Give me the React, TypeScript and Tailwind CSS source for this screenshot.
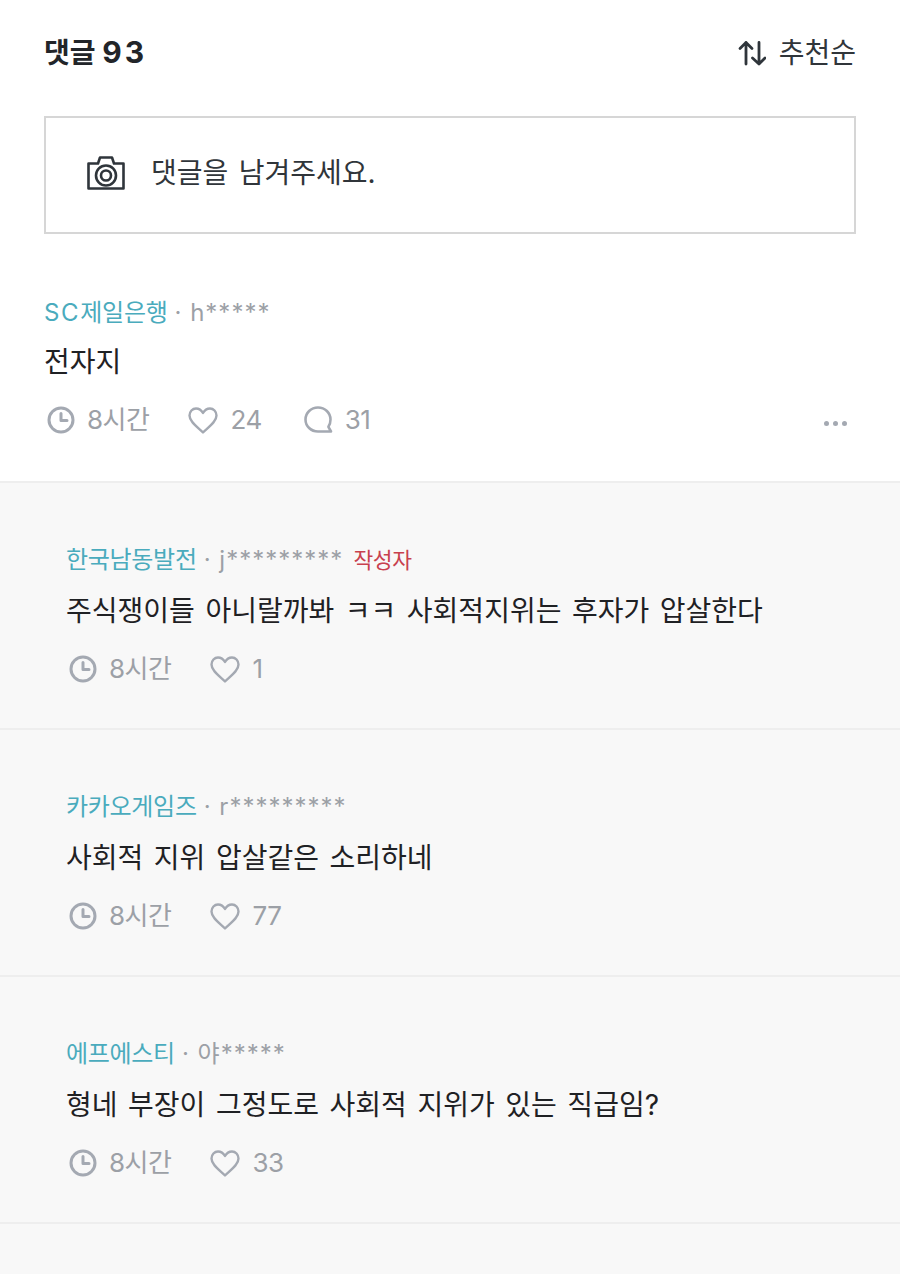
import React from 'react';

interface CommentItem {
  company: React.ReactNode;
  user: string;
  body: string;
  likes: number;
  replies?: number;
  author?: boolean;
}

const comments: CommentItem[] = [
  { company: '한국남동발전', user: 'j*********', body: '주식쟁이들 아니랄까봐 ㅋㅋ 사회적지위는 후자가 압살한다', likes: 1, author: true },
  { company: '카카오게임즈', user: 'r*********', body: '사회적 지위 압살같은 소리하네', likes: 77 },
  { company: '에프에스티', user: '야*****', body: '형네 부장이 그정도로 사회적 지위가 있는 직급임?', likes: 33 },
];

const ClockIcon = () => (
  <svg width="28" height="28" viewBox="0 0 28 28" fill="none" stroke="#a4a9b2" strokeWidth="3" strokeLinecap="round" strokeLinejoin="round">
    <circle cx="14" cy="14" r="12" />
    <path d="M14 7.500V14.500H20" />
  </svg>
);

const HeartIcon = () => (
  <svg width="30" height="27" viewBox="0 0 30 27" fill="none" stroke="#a4a9b2" strokeWidth="2.400" strokeLinejoin="round">
    <path d="M15 25.500C10 20.500 1.500 15 1.500 8.500C1.500 4.500 4.500 1.500 8 1.500C11 1.500 13.500 3.300 15 6C16.500 3.300 19 1.500 22 1.500C25.500 1.500 28.500 4.500 28.500 8.500C28.500 15 20 20.500 15 25.500Z" />
  </svg>
);

const BubbleIcon = () => (
  <svg width="30" height="30" viewBox="0 0 30 30" fill="none" stroke="#a4a9b2" strokeWidth="2.600" strokeLinecap="round" strokeLinejoin="round">
    <path d="M15 2.500C8 2.500 2.500 7.800 2.500 14.500S8 26.500 15 26.500H28L25.400 21.800C26.800 19.800 27.500 17.300 27.500 14.500 27.500 7.800 22 2.500 15 2.500Z" />
  </svg>
);

const CameraIcon = () => (
  <svg width="38" height="34" viewBox="0 0 38 34" fill="none" stroke="#2f353b" strokeWidth="2.600" strokeLinejoin="round">
    <path d="M1.500 7.500H11L13 1.500H25L27 7.500H36.500V32.500H1.500Z" />
    <circle cx="19" cy="19.500" r="10" />
    <circle cx="19" cy="19.500" r="5" />
  </svg>
);

const SortIcon = () => (
  <svg width="28" height="26" viewBox="0 0 28 26" fill="none" stroke="#2f353b" strokeWidth="2.800" strokeLinecap="round" strokeLinejoin="round">
    <path d="M8 24V2.500M2 8.500L8 2.500L14 8.500" />
    <path d="M21 2.500V24M14.500 18L21 24L27 18" />
  </svg>
);

const Stat = ({ icon, label, className = '' }: { icon: React.ReactNode; label: string | number; className?: string }) => (
  <span className={`flex items-center gap-[12px] text-[26px] leading-[30px] tracking-[-0.5px] text-[#9ca0a6] ${className}`}>
    {icon}
    <span>{label}</span>
  </span>
);

const Meta = ({ likes, replies }: { likes: number; replies?: number }) => (
  <div className="flex items-center gap-[39px]">
    <Stat icon={<ClockIcon />} label="8시간" />
    <Stat icon={<HeartIcon />} label={likes} />
    {replies !== undefined && <Stat icon={<BubbleIcon />} label={replies} className="ml-[2px]" />}
  </div>
);

const CommentHead = ({ item }: { item: CommentItem }) => (
  <div className="flex items-center text-[24px] leading-[30px]">
    <span className="tracking-[-0.3px] text-[#4aabbd]">{item.company}</span>
    <span className="ml-[7px] tracking-[1px] text-[#9ca0a6]">· {item.user}</span>
    {item.author && <span className="ml-[10px] text-[21.500px] tracking-[-0.3px] text-[#c8414e]">작성자</span>}
  </div>
);

export default function App() {
  const first: CommentItem = {
    company: (
      <>
        <span className="tracking-[1.700px]">SC</span>제일은행
      </>
    ),
    user: 'h*****',
    body: '전자지',
    likes: 24,
    replies: 31,
  };

  return (
    <div className="h-[1274px] overflow-hidden bg-white text-[#222529] font-['Inter','Noto_Sans_CJK_KR',sans-serif]">
      <header className="flex h-[72px] items-center justify-between px-[44px] pt-[34px]">
        <h2 className="text-[28px] leading-[38px] font-bold">
          댓글 <span className="text-[30px] leading-none tracking-[3px]">93</span>
        </h2>
        <button className="flex items-center gap-[13px] text-[28px] leading-[38px] text-[#30353a]">
          <SortIcon />
          추천순
        </button>
      </header>

      <div className="mx-[44px] mt-[44px] flex h-[118px] items-center gap-[26px] border-2 border-[#d6d6d6] pb-[4px] pl-[41px]">
        <CameraIcon />
        <span className="text-[28px] [word-spacing:2.500px] text-[#30353a]">댓글을 남겨주세요.</span>
      </div>

      <article className="h-[249px] border-b-2 border-[#eeeeee] px-[44px] pt-[64px]">
        <CommentHead item={first} />
        <p className="mt-[14px] text-[28px] leading-[40px] text-[#1f2124]">{first.body}</p>
        <div className="mt-[23px] flex items-center justify-between pl-[3px] pr-[9px]">
          <Meta likes={first.likes} replies={first.replies} />
          <span className="mt-[6px] flex gap-[4px]">
            <i className="h-[5px] w-[5px] rounded-full bg-[#a4a9b2]" />
            <i className="h-[5px] w-[5px] rounded-full bg-[#a4a9b2]" />
            <i className="h-[5px] w-[5px] rounded-full bg-[#a4a9b2]" />
          </span>
        </div>
      </article>

      <div className="bg-[#f8f8f8]">
        {comments.map((item) => (
          <article key={item.user} className="h-[247px] border-b-2 border-[#eeeeee] pl-[66px] pt-[62px]">
            <CommentHead item={item} />
            <p className="mt-[16px] text-[28px] leading-[40px] [word-spacing:2.700px] text-[#1f2124]">{item.body}</p>
            <div className="mt-[23px] pl-[3px]">
              <Meta likes={item.likes} />
            </div>
          </article>
        ))}
        <div className="h-[60px]" />
      </div>
    </div>
  );
}
